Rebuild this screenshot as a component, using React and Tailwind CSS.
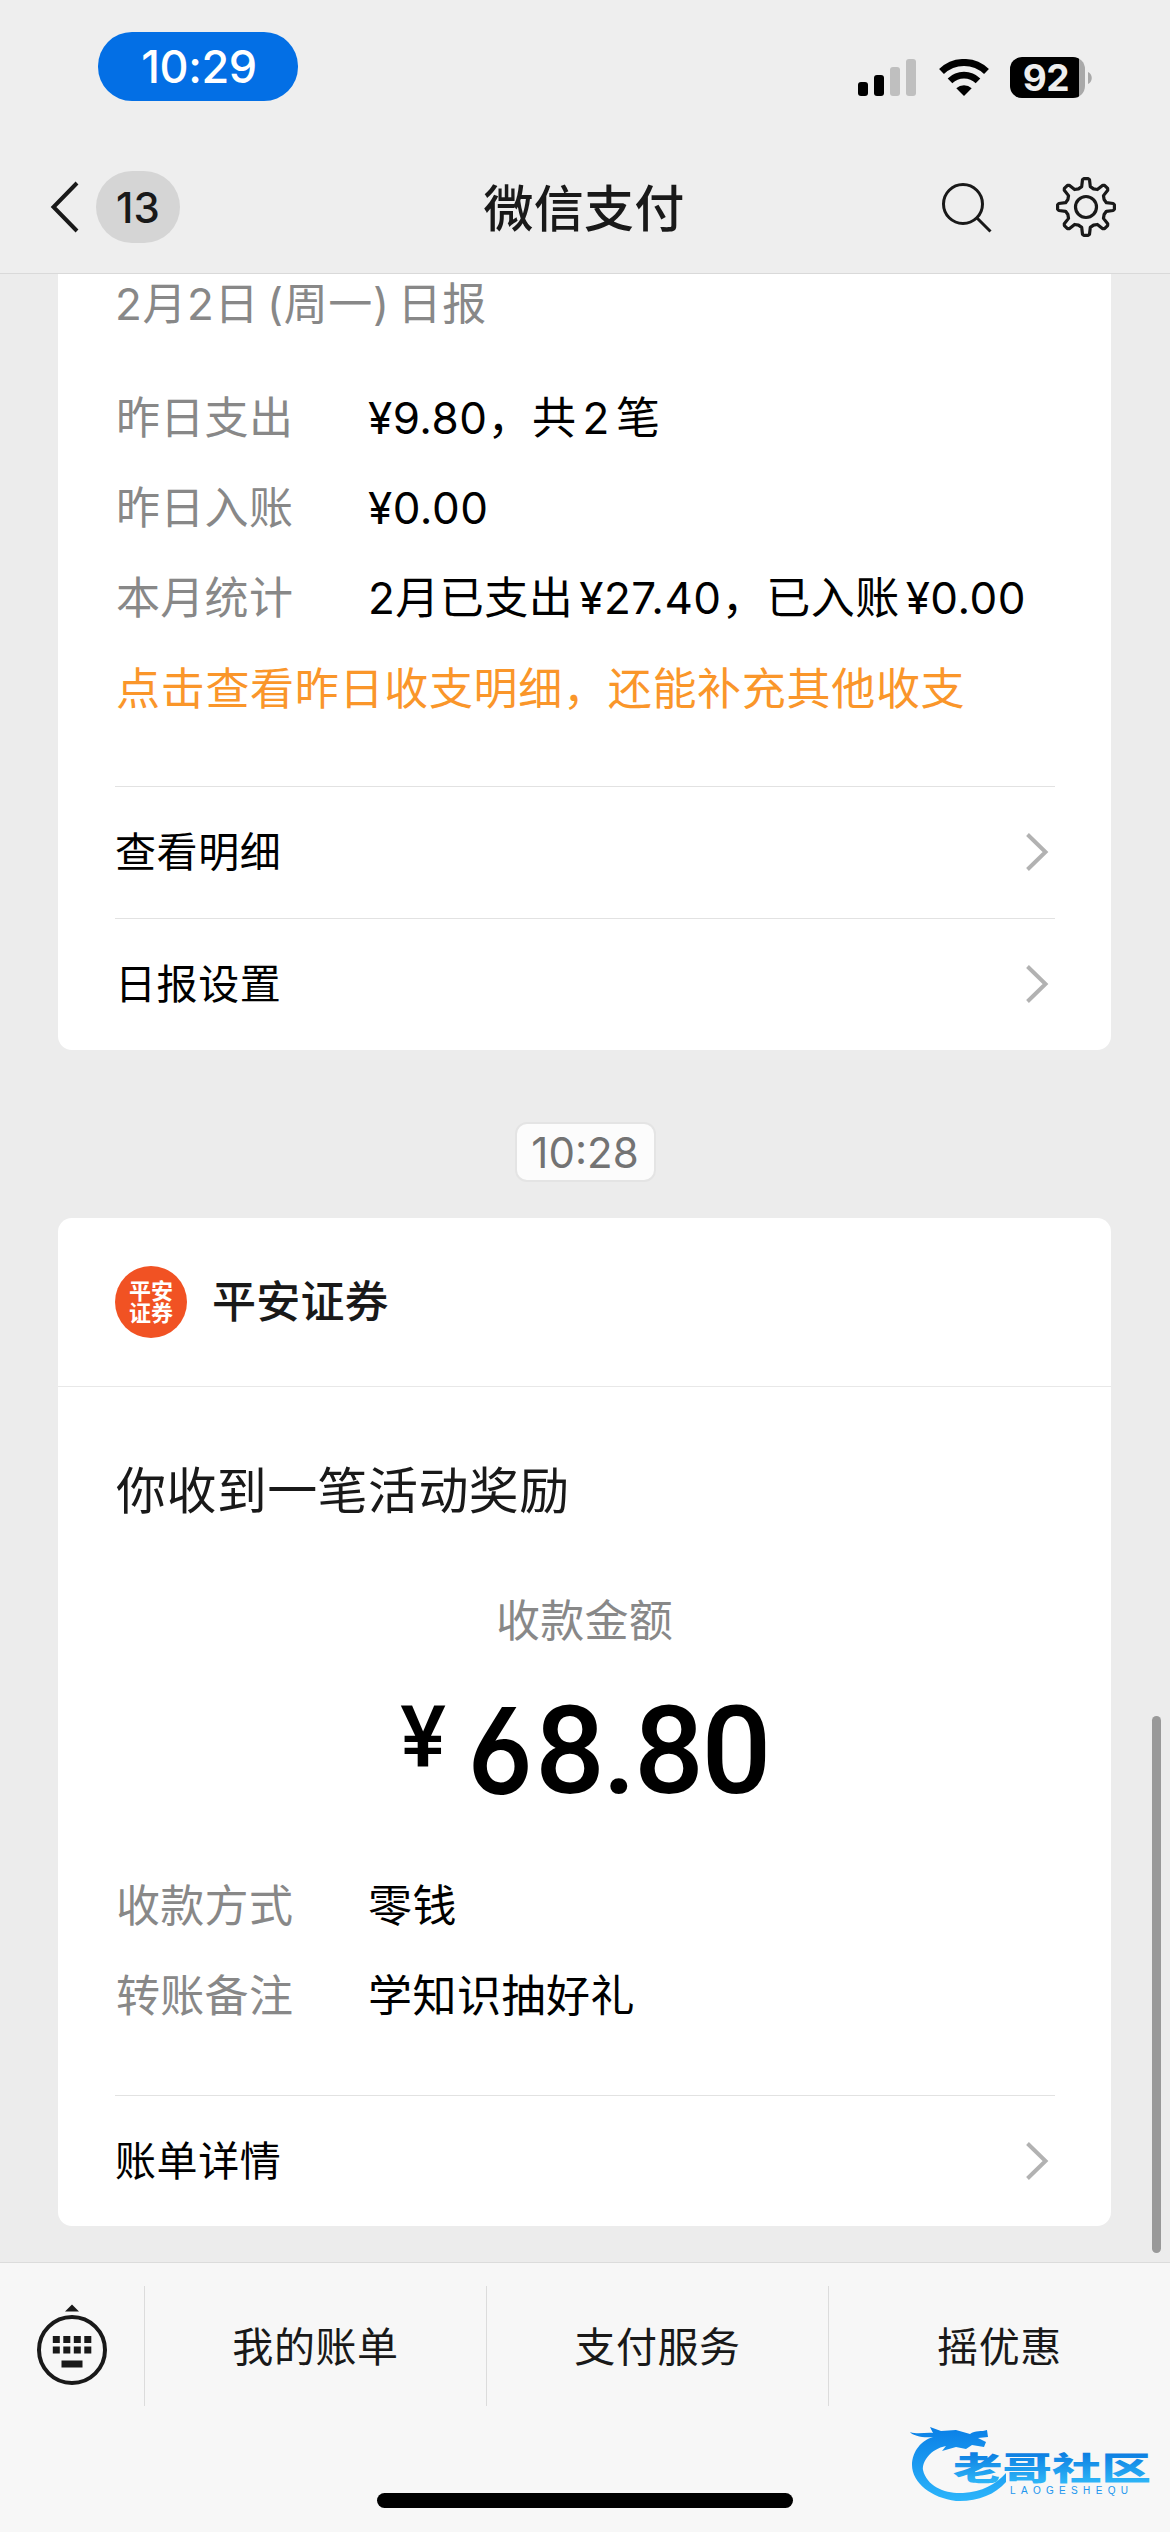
import React from "react";

const reportRows = [
  { label: "昨日支出", parts: ["¥9.80，共", "2", "笔"] },
  { label: "昨日入账", parts: ["¥0.00"] },
  { label: "本月统计", parts: ["2月已支出", "¥27.40，已入账", "¥0.00"] },
];

const paymentRows = [
  { label: "收款方式", parts: ["零钱"] },
  { label: "转账备注", parts: ["学知识抽好礼"] },
];

const tabs = ["我的账单", "支付服务", "摇优惠"];

// eight-tooth gear outline around 0,0
const tooth = [
  [-4.3, -20.4],
  [-3.5, -27.2],
  [-2.2, -28.4],
  [2.2, -28.4],
  [3.5, -27.2],
  [4.3, -20.4],
  [7.5, -18.1],
];
const gearPoints = Array.from({ length: 8 }, (_, i) => {
  const a = (i * Math.PI) / 4;
  return tooth
    .map(([x, y]) => `${(x * Math.cos(a) - y * Math.sin(a)).toFixed(2)},${(x * Math.sin(a) + y * Math.cos(a)).toFixed(2)}`)
    .join(" ");
}).join(" ");

function StatusBar() {
  return (
    <div className="flex h-[134px] items-start justify-between pl-[98px] pr-[78px]">
      <div className="mt-8 flex h-[69px] w-[200px] items-center justify-center rounded-[34px] bg-[#036fe5] pl-[2px] text-[45px] font-medium tracking-[-0.4px] text-white">
        10:29
      </div>
      <div className="mt-[57px] flex h-[41px] items-center">
        <svg width="58" height="37" viewBox="0 0 58 37">
          <rect x="0" y="23" width="10" height="14" rx="3" fill="#000" />
          <rect x="16" y="16" width="10" height="21" rx="3" fill="#000" />
          <rect x="32" y="8" width="10" height="29" rx="3" fill="#bfbfbf" />
          <rect x="48" y="0" width="10" height="37" rx="3" fill="#bfbfbf" />
        </svg>
        <svg className="ml-[22px]" width="52" height="37" viewBox="0 0 52 37">
          <path d="M3.5 12.5a32.5 32.5 0 0 1 45 0" fill="none" stroke="#000" strokeWidth="7" />
          <path d="M12 21.8a20 20 0 0 1 28 0" fill="none" stroke="#000" strokeWidth="6.6" />
          <path d="M18.3 29.3a11.5 11.5 0 0 1 15.4 0L26 37z" fill="#000" />
        </svg>
        <div className="ml-[20px] h-[41px] w-[75px] rounded-[12px] bg-[linear-gradient(to_right,#000_69px,#a9a9a9_69px)] pr-[3px] text-center text-[37px] font-bold leading-[41px] tracking-[-0.5px] text-[#eeeeee]">
          92
        </div>
        <svg className="ml-[3px]" width="4" height="12" viewBox="0 0 4 12">
          <path d="M0 0c5 2 5 10 0 12z" fill="#a9a9a9" />
        </svg>
      </div>
    </div>
  );
}

function NavBar() {
  return (
    <div className="grid h-[146px] grid-cols-3 items-center text-[#191919]">
      <div className="flex items-center pl-[50px]">
        <svg width="30" height="52" viewBox="0 0 30 52" fill="none" stroke="currentColor" strokeWidth="4">
          <path d="M27 2L3.500 26L27 50" />
        </svg>
        <span className="ml-4 flex h-[72px] w-[84px] items-center justify-center rounded-[36px] bg-[#d5d5d5] text-[42px] font-medium">
          13
        </span>
      </div>
      <h1 className="pr-[2px] pt-[3px] text-center text-[50px] font-medium leading-[60px] tracking-[0.3px]">微信支付</h1>
      <div className="flex items-center justify-end pr-[52px]">
        <svg width="52" height="52" viewBox="0 0 52 52" fill="none" stroke="currentColor" strokeWidth="3">
          <circle cx="23" cy="23" r="19.500" />
          <path d="M37 37L50.500 50.500" />
        </svg>
        <svg className="ml-[62px]" width="64" height="64" viewBox="-32 -32 64 64" fill="none" stroke="currentColor" strokeWidth="3.200" strokeLinejoin="round">
          <polygon points={gearPoints} />
          <circle r="10.500" />
        </svg>
      </div>
    </div>
  );
}

function InfoRow({ label, parts }) {
  return (
    <div className="flex h-[90px] items-center pt-[2px] text-[44px] leading-[60px]">
      <span className="w-[252px] tracking-[0.3px] text-[#888888]">{label}</span>
      <span className="flex gap-[6px] whitespace-nowrap tracking-[0.5px] text-black">
        {parts.map((part, i) => (
          <span key={i}>{part}</span>
        ))}
      </span>
    </div>
  );
}

function LinkRow({ children }) {
  return (
    <div className="ml-[57px] mr-[56px] flex h-[132px] items-center justify-between border-t border-[#e2e2e2] pb-[2px] pr-[6px] text-[41px] leading-[60px] tracking-[0.6px] text-black">
      <span>{children}</span>
      <svg width="24" height="40" viewBox="0 0 24 40" fill="none" stroke="#b2b2b2" strokeWidth="4">
        <path d="M2.500 2.500L20.500 20L2.500 37.500" />
      </svg>
    </div>
  );
}

function KeyboardIcon() {
  return (
    <svg className="mb-[5px]" width="72" height="84" viewBox="0 0 72 84" fill="#191919">
      <path d="M36 2.500L43 9.500H29z" />
      <circle cx="36" cy="48" r="33" fill="none" stroke="#191919" strokeWidth="4" />
      {[16.8, 27.3, 37.8, 48.3].map((x) => (
        <g key={x}>
          <rect x={x} y="34" width="7" height="7" />
          <rect x={x} y="44.500" width="7" height="7" />
        </g>
      ))}
      <rect x="25.500" y="58.500" width="21" height="7" />
    </svg>
  );
}

function Watermark() {
  return (
    <svg className="absolute left-[908px] top-[2420px]" width="250" height="86" viewBox="0 0 250 86">
      <defs>
        <linearGradient id="ring" x1="0" y1="0" x2="0" y2="1">
          <stop offset="0" stopColor="#0a7fe6" />
          <stop offset="1" stopColor="#2cb5fb" />
        </linearGradient>
        <linearGradient id="word" gradientUnits="userSpaceOnUse" x1="0" y1="31" x2="0" y2="64">
          <stop offset="0" stopColor="#0a7ae0" />
          <stop offset="1" stopColor="#2fb8f8" />
        </linearGradient>
      </defs>
      <path
        d="M2 12C10 15 18 12 25 13L22 7L33 11L48 10L62 14C67 10 74 12 79 10L80 17L70 18L78 22L76 27L64 25L58 29L48 27L34 31L38 26C22 29 14 42 15 50C19 67 38 74 55 73C74 72 88 64 98 53L98 62C87 75 68 82 48 81C24 78 4 63 4 45C4 31 14 20 25 17C15 18 5 16 2 12Z"
        fill="url(#ring)"
      />
      <text x="45" y="59.500" textLength="198" lengthAdjust="spacingAndGlyphs" fontSize="32" fontWeight="900" fill="url(#word)" fontFamily="'Noto Sans CJK SC', sans-serif">
        老哥社区
      </text>
      <text x="102" y="74" textLength="118" fontSize="10" fill="#2196ee" fontFamily="'Liberation Sans', sans-serif">
        LAOGESHEQU
      </text>
    </svg>
  );
}

export default function App() {
  return (
    <div className="relative flex h-[2532px] w-[1170px] flex-col overflow-hidden bg-[#ececec] font-['Inter','Noto_Sans_CJK_SC',sans-serif]">
      <header className="h-[274px] shrink-0 border-b border-[#d9d9d9] bg-[#eeeeee]">
        <StatusBar />
        <NavBar />
      </header>

      <main className="h-[1988px] shrink-0">
        <section className="ml-[58px] h-[776px] w-[1053px] rounded-b-[14px] bg-white">
          <div className="flex gap-2 px-[57px] text-[44px] leading-[60px] tracking-[0.6px] text-[#888888]">
            <span>2月2日</span>
            <span>(周一)</span>
            <span>日报</span>
          </div>
          <div className="mt-[38px] h-[414px] px-[58px]">
            {reportRows.map((row) => (
              <InfoRow key={row.label} {...row} />
            ))}
            <p className="flex h-[90px] items-center whitespace-nowrap pt-[3px] text-[44px] tracking-[0.7px] text-[#fa962a]">
              点击查看昨日收支明细，还能补充其他收支
            </p>
          </div>
          <LinkRow>查看明细</LinkRow>
          <LinkRow>日报设置</LinkRow>
        </section>

        <div className="flex h-[168px] items-center justify-center pt-[36px]">
          <time className="flex h-[60px] w-[141px] items-center justify-center rounded-[12px] border-2 border-[#e4e4e4] bg-[#fcfcfc] text-[42px] text-[#737373]">
            10:28
          </time>
        </div>

        <section className="ml-[58px] h-[1008px] w-[1053px] rounded-[14px] bg-white">
          <div className="flex h-[169px] items-center border-b border-[#e8e8e8] px-[57px]">
            <div className="flex h-[72px] w-[72px] flex-col items-center justify-center rounded-full bg-[#f15223] text-[22px] font-bold leading-[22px] text-white">
              <span>平安</span>
              <span>证券</span>
            </div>
            <span className="ml-[25px] text-[44px] font-medium leading-[60px] tracking-[0.2px] text-[#191919]">平安证券</span>
          </div>
          <h2 className="mt-[74px] px-[58px] text-[50px] leading-[60px] tracking-[0.4px] text-[#191919]">你收到一笔活动奖励</h2>
          <p className="mt-[70px] text-center text-[44px] leading-[60px] tracking-[0.3px] text-[#888888]">收款金额</p>
          <div className="mt-[27px] flex h-[146px] justify-center font-['Roboto'] font-medium text-black">
            <span className="mt-[10px] text-[86px] leading-[100px]">¥</span>
            <span className="ml-[22px] flex text-[123px] leading-[146px] tracking-[-2.5px]">
              <span className="w-[67px] origin-left scale-x-[0.9] font-['Inter'] text-[120px] font-semibold tracking-normal [font-feature-settings:'cv03']">6</span>
              <span>8.80</span>
            </span>
          </div>
          <div className="mt-[36px] h-[235px] px-[58px]">
            {paymentRows.map((row) => (
              <InfoRow key={row.label} {...row} />
            ))}
          </div>
          <LinkRow>账单详情</LinkRow>
        </section>
      </main>

      <footer className="flex h-[270px] shrink-0 flex-col items-center border-t border-[#dcdcdc] bg-[#f7f7f7] pt-[23px]">
        <div className="flex h-[120px] w-full">
          <div className="flex w-[144px] items-center justify-center">
            <KeyboardIcon />
          </div>
          {tabs.map((tab) => (
            <button key={tab} className="w-[342px] border-l border-[#dcdcdc] pt-[3px] text-[41px] tracking-[0.6px] text-[#191919]">
              {tab}
            </button>
          ))}
        </div>
        <div className="mt-[87px] h-[15px] w-[416px] rounded-full bg-black" />
      </footer>

      <div className="absolute left-[1152px] top-[1716px] h-[537px] w-[9px] rounded-full bg-[#999999]" />
      <Watermark />
    </div>
  );
}
